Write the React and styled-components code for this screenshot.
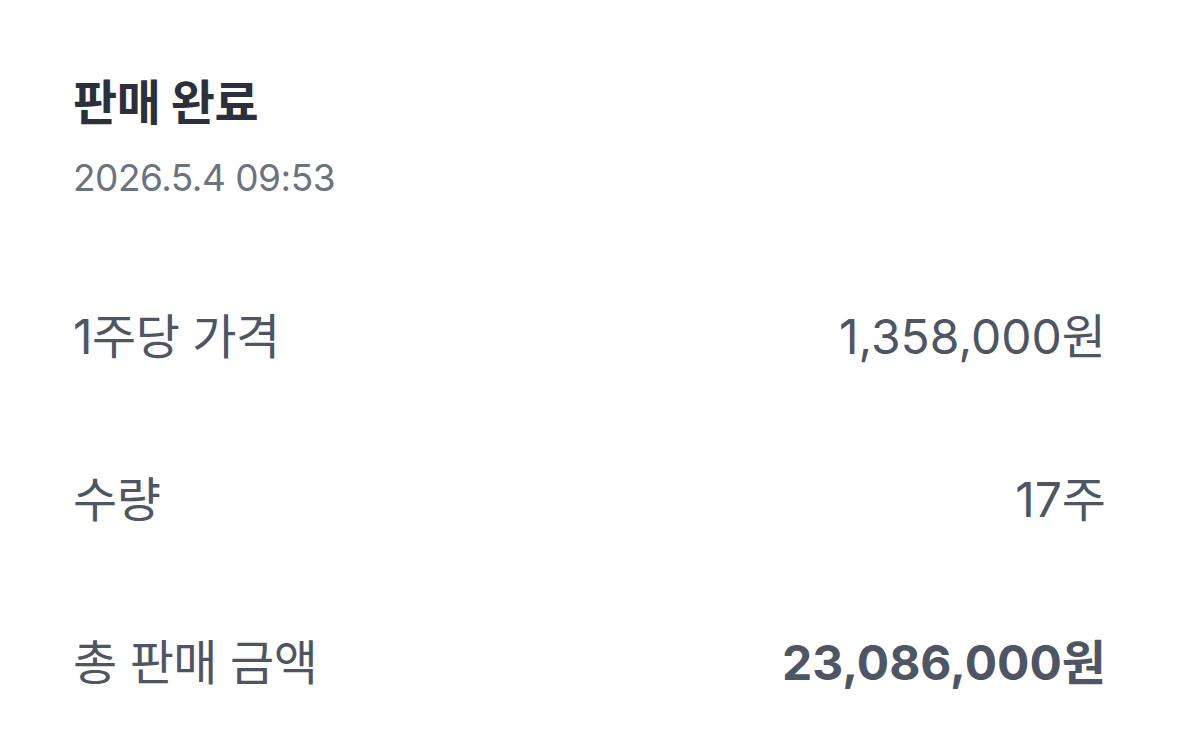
import React from 'react';
import styled, { createGlobalStyle } from 'styled-components';

const GlobalStyle = createGlobalStyle`
    html, body {
        margin: 0;
        padding: 0;
        background: #ffffff;
    }
    body {
        font-family: "Inter", "Noto Sans CJK KR", sans-serif;
    }
`

const Page = styled.div`
    width: 1179px;
    height: 753px;
    box-sizing: border-box;
    padding: 66px 73px 0 73px;
    background: #ffffff;
`

const Title = styled.h1`
    margin: 0;
    font-family: "Noto Sans CJK KR", sans-serif;
    font-size: 48px;
    line-height: 66px;
    font-weight: 700;
    color: #2b303b;
    letter-spacing: -0.5px;
`

const Time = styled.div`
    margin-top: 24px;
    font-size: 37px;
    line-height: 44px;
    font-weight: 400;
    color: #6b7380;
    letter-spacing: -0.5px;
`

const List = styled.div`
    display: flex;
    flex-direction: column;
    margin-top: 102px;
    gap: 101px;
`

const Row = styled.div`
    display: flex;
    align-items: center;
    justify-content: space-between;
    height: 62px;
    color: #4e5563;
    font-size: 48px;
`

const Label = styled.span`
    font-weight: 400;
    letter-spacing: -0.5px;
`

const Value = styled.span`
    font-weight: ${p => (p.$bold ? 700 : 400)};
    letter-spacing: 0;
`

const rows = [
    { label: '1주당 가격', value: '1,358,000원' },
    { label: '수량', value: '17주' },
    { label: '총 판매 금액', value: '23,086,000원', bold: true },
]

const App = () => {
    return (
        <>
            <GlobalStyle />
            <Page>
                <Title>판매 완료</Title>
                <Time>2026.5.4 09:53</Time>
                <List>
                    {rows.map(r => (
                        <Row key={r.label}>
                            <Label>{r.label}</Label>
                            <Value $bold={r.bold}>{r.value}</Value>
                        </Row>
                    ))}
                </List>
            </Page>
        </>
    )
}

export default App;
